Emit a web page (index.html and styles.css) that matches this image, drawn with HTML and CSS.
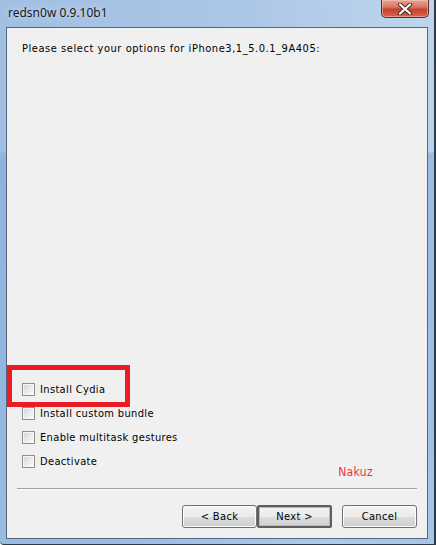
FILE: index.html
```html
<!DOCTYPE html>
<html lang="en">
<head>
    <meta charset="UTF-8">
    <title>redsn0w 0.9.10b1</title>
    <link rel="stylesheet" href="styles.css">
</head>
<body>
    <div class="window">
        <div class="titlebar">
            <span class="title">redsn0w 0.9.10b1</span>
            <span class="close-btn">
                <svg width="16" height="12" viewBox="0 0 16 12">
                    <path d="M3 1.5 L13 10.5 M13 1.5 L3 10.5" stroke="#4a2a24" stroke-width="4.2" stroke-linecap="round"/>
                    <path d="M3 1.5 L13 10.5 M13 1.5 L3 10.5" stroke="#ffffff" stroke-width="2.2" stroke-linecap="round"/>
                </svg>
            </span>
        </div>

        <div class="client">
            <p class="prompt">Please select your options for iPhone3,1_5.0.1_9A405:</p>

            <div class="options-area">
                <ul class="options">
                    <li><span class="checkbox"></span>Install Cydia</li>
                    <li><span class="checkbox"></span>Install custom bundle</li>
                    <li><span class="checkbox"></span>Enable multitask gestures</li>
                    <li><span class="checkbox"></span>Deactivate</li>
                </ul>
                <span class="nakuz">Nakuz</span>
            </div>

            <div class="separator"></div>

            <div class="buttons">
                <button class="btn">&lt; Back</button>
                <button class="btn btn-default">Next &gt;</button>
                <button class="btn btn-cancel">Cancel</button>
            </div>
        </div>

        <!-- red highlight drawn on top of the screenshot -->
        <div class="highlight"></div>
    </div>
</body>
</html>
```

FILE: styles.css
```css
*{
    box-sizing: border-box;
    padding: 0;
    margin: 0;
}

body{
    width: 436px;
    height: 545px;
    overflow: hidden;
    background: #ffffff;
}

.window{
    position: relative;
    width: 436px;
    height: 545px;
    display: flex;
    flex-direction: column;
    border-right: 2px solid #2f3a47;
    border-bottom: 1px solid #2f3a47;
    border-bottom-left-radius: 4px;
    background:
        linear-gradient(100deg, rgba(140,175,218,0.55) 0, rgba(140,175,218,0.35) 45%, rgba(200,220,242,0.2) 80%, rgba(200,220,242,0) 100%),
        linear-gradient(to bottom, #bcd3ec 0, #b8d0eb 152px, #93b8e1 153px, #9cbee5 400px, #a6c5e8 100%);
}

.titlebar{
    height: 27px;
    display: flex;
    justify-content: space-between;
    align-items: flex-start;
    padding-right: 5px;
}

.title{
    font-family: "Noto Sans", "Open Sans", sans-serif;
    font-size: 12px;
    line-height: 16px;
    color: #1b1b1b;
    padding-left: 8px;
    padding-top: 5px;
    text-shadow: 0 0 6px rgba(255,255,255,0.7);
}

.close-btn{
    width: 48px;
    height: 18px;
    display: flex;
    align-items: center;
    justify-content: center;
    border: 1px solid #5b2d26;
    border-top: none;
    border-radius: 0 0 5px 5px;
    background: linear-gradient(to bottom, #e8a193 0, #d87a66 40%, #c5432d 55%, #d8654c 100%);
    box-shadow: inset 0 0 0 1px rgba(255,220,210,0.45);
}

.client{
    margin-left: 6px;
    width: 422px;
    height: 512px;
    border: 1px solid #56677d;
    background: #f0f0f0;
    display: flex;
    flex-direction: column;
    padding-bottom: 10px;
    font-family: "DejaVu Sans Condensed", "DejaVu Sans", sans-serif;
    font-size: 11px;
    letter-spacing: 0.35px;
    color: #000000;
}

.prompt{
    margin-top: 14px;
    padding-left: 15px;
    line-height: 13px;
    letter-spacing: 0.55px;
}

.options-area{
    margin-top: auto;
    display: flex;
    justify-content: space-between;
    align-items: flex-end;
    padding-left: 15px;
    padding-right: 54px;
    margin-bottom: 8px;
}

.options{
    list-style: none;
    margin-bottom: 7px;
}

.options li{
    height: 24px;
    display: flex;
    align-items: center;
    gap: 5px;
}

.checkbox{
    width: 13px;
    height: 13px;
    border: 1px solid #8e8f8f;
    background: linear-gradient(135deg, #d2d2d2 0, #ececec 55%, #fbfbfb 100%);
    box-shadow: inset 0 0 0 1px #f6f6f6;
}

.nakuz{
    color: #f2303e;
    font-size: 12px;
    line-height: 14px;
    margin-bottom: 1px;
}

.separator{
    margin: 0 10px;
    height: 2px;
    border-top: 1px solid #a0a0a0;
    border-bottom: 1px solid #ffffff;
}

.buttons{
    margin-top: 15px;
    display: flex;
    justify-content: flex-end;
    padding-right: 10px;
}

.btn{
    width: 75px;
    height: 23px;
    border: 1px solid #707070;
    border-radius: 3px;
    background: linear-gradient(to bottom, #f2f2f2 0, #ebebeb 50%, #dddddd 51%, #cfcfcf 100%);
    box-shadow: inset 0 0 0 1px #fcfcfc;
    font-family: "DejaVu Sans Condensed", "DejaVu Sans", sans-serif;
    font-size: 11px;
    letter-spacing: 0.35px;
    color: #000000;
}

.btn-default{
    border: 2px solid #5e5e5e;
    border-radius: 2px;
    box-shadow: inset 0 0 0 1px #b8b8b8;
}

.btn-cancel{
    margin-left: 10px;
}

.highlight{
    position: absolute;
    left: 7px;
    top: 365px;
    width: 123px;
    height: 42px;
    border: 5px solid #ed1c24;
}
```
